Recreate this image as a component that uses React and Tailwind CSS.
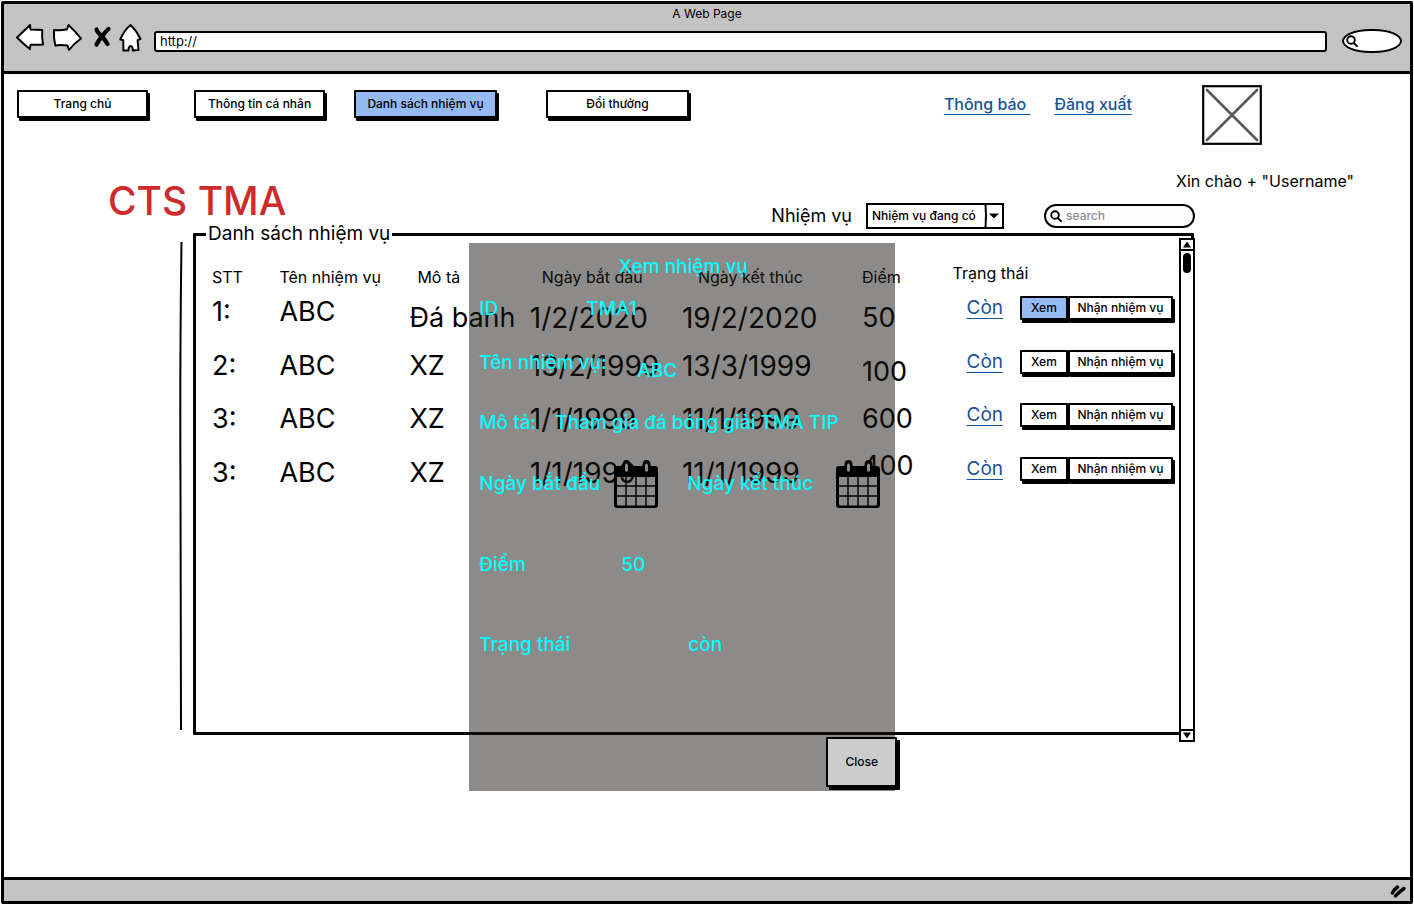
import React from 'react';

const navItems = [
  { label: 'Trang chủ', place: 'w-[131px] mr-[46px]' },
  { label: 'Thông tin cá nhân', place: 'w-[131px] mr-[29px]' },
  { label: 'Danh sách nhiệm vụ', place: 'w-[143px] mr-[49px]', active: true },
  { label: 'Đổi thưởng', place: 'w-[143px]' },
];

const tasks = [
  { no: '1:', name: 'ABC', desc: 'Đá banh', start: '1/2/2020', end: '19/2/2020', points: '50', height: 'h-[54px]', detail: 'align-bottom', pointsAlign: 'align-bottom', active: true },
  { no: '2:', name: 'ABC', desc: 'XZ', start: '13/2/1999', end: '13/3/1999', points: '100', height: 'h-[54px]', detail: 'align-middle', pointsAlign: 'align-bottom' },
  { no: '3:', name: 'ABC', desc: 'XZ', start: '1/1/1999', end: '11/1/1999', points: '600', height: 'h-[52px]', detail: 'align-middle', pointsAlign: 'align-middle' },
  { no: '3:', name: 'ABC', desc: 'XZ', start: '1/1/1999', end: '11/1/1999', points: '400', height: 'h-[56px]', detail: 'align-middle', pointsAlign: 'align-top' },
];

function SketchButton({ children, className = '', active = false }) {
  return (
    <button
      type="button"
      className={`shrink-0 whitespace-nowrap rounded-[1px] border-2 border-black font-medium shadow-[2px_3px_0_#000] ${active ? 'bg-[#94b9f3]' : 'bg-white'} ${className}`}
    >
      {children}
    </button>
  );
}

function SearchIcon({ className }) {
  return (
    <svg viewBox="0 0 12 12" className={className} fill="none" stroke="#000" strokeWidth="1.9" strokeLinecap="round" aria-hidden="true">
      <circle cx="5" cy="5" r="3.8" />
      <path d="M7.8 8 L11 11.2" />
    </svg>
  );
}

function BrowserIcons() {
  return (
    <svg width="130" height="32" viewBox="0 0 130 32" className="shrink-0" fill="#fff" stroke="#000" strokeWidth="2" strokeLinejoin="round" strokeLinecap="round" aria-hidden="true">
      <path d="M3 15.500 L16 3 L16.500 7.500 Q22 7.600 28.300 8 Q27.600 15 29 22.500 Q22 23 16.500 22.800 L15.800 27 Q9 21.500 3 15.500 Z" />
      <path d="M40 8 Q47 8.600 53 7.300 L54.500 3 Q61 9 67 16.500 Q60 21.500 55 28 L53.500 23.500 Q46 22.500 41.300 23.500 Q39.500 16 40 8 Z" />
      <path d="M82.500 7.500 Q83.500 10.500 88 14.500 Q91.500 18.500 93.500 22 M94.500 7 Q91.500 9.500 88 14.500 Q84.500 18.500 82.500 22.500" fill="none" strokeWidth="4.200" />
      <path d="M116.500 3 Q122 8 126.500 17 L123.600 18.200 L124.500 28 L118.800 28.500 Q119 24 116.500 24 Q114.500 24.500 114.400 28.500 L109.400 28.500 L109.300 18.300 L106.300 17.500 Q110 8.500 116.500 3 Z" />
    </svg>
  );
}

function CalendarIcon() {
  return (
    <svg width="46" height="50" viewBox="0 0 46 50" className="shrink-0" aria-hidden="true">
      <path fillRule="evenodd" fill="#000" d="M4 7 H42 Q45 7 45 10 V46 Q45 49 42 49 H4 Q1 49 1 46 V10 Q1 7 4 7 Z M4 18 V45 Q4 46.500 5.500 46.500 H41 Q42 46.500 42 45 V18 Z" />
      <path fill="none" stroke="#000" strokeWidth="1.400" d="M13 18 V47 M23 18 V47 M33 18 V47 M3 27 H43 M3 37 H43" />
      <path d="M10.500 6 Q10.500 2 13.500 2 Q16.500 2 16.500 6 V12 Q13.500 15 10.500 12 Z M30.500 6 Q30.500 2 33.500 2 Q36.500 2 36.500 6 V12 Q33.500 15 30.500 12 Z" fill="#000" stroke="#000" strokeWidth="2" />
      <path d="M12 6 Q13.500 2.500 15 6 V12 Q13.500 13.500 12 12 Z M32 6 Q33.500 2.500 35 6 V12 Q33.500 13.500 32 12 Z" fill="#8d8a87" />
    </svg>
  );
}

function BrowserBar() {
  return (
    <header className="flex h-[70px] shrink-0 flex-col border-b-[3px] border-black bg-[#c3c3c3]">
      <p className="h-[18px] pt-0.5 text-center text-xs leading-4">A Web Page</p>
      <div className="flex h-8 items-center pl-2.5 pr-2">
        <BrowserIcons />
        <input
          type="text"
          aria-label="Address"
          defaultValue="http://"
          className="ml-[10px] mt-1.5 h-[21px] min-w-0 flex-1 rounded-[3px] border-2 border-black bg-white px-1 text-[13px] outline-none"
        />
        <label className="ml-[15px] mt-1.5 flex h-6 w-[60px] items-center rounded-[28px/12px] border-2 border-black bg-white pl-0.5">
          <SearchIcon className="size-3 shrink-0" />
          <input type="text" aria-label="Quick search" className="min-w-0 flex-1 bg-transparent text-xs outline-none" />
        </label>
      </div>
    </header>
  );
}

function TopNav() {
  return (
    <div className="flex items-start pl-[13px]">
      <nav className="mt-[5px] flex">
        {navItems.map((item) => (
          <SketchButton key={item.label} active={item.active} className={`h-7 text-xs ${item.place}`}>
            {item.label}
          </SketchButton>
        ))}
      </nav>
      <div className="ml-auto mr-[148px] flex items-start">
        <div className="mt-[7px] flex gap-6 text-base font-medium text-[#1a5296]">
          <a href="#thong-bao" className="whitespace-pre underline decoration-1 underline-offset-4">{'Thông báo '}</a>
          <a href="#dang-xuat" className="underline decoration-1 underline-offset-4">Đăng xuất</a>
        </div>
        <svg width="60" height="60" viewBox="0 0 60 60" className="ml-[70px]" role="img" aria-label="Avatar">
          <rect x="1.200" y="1.200" width="57.600" height="57.600" fill="#fff" stroke="#000" strokeWidth="2.200" />
          <path d="M5 5 L55 55 M55 5 L5 55" stroke="#575757" strokeWidth="2.600" strokeLinecap="round" />
        </svg>
      </div>
    </div>
  );
}

function Filters() {
  return (
    <div className="flex h-[60px] justify-between pl-[104px]">
      <h1 className="flex items-center pt-1 text-[39px] font-medium text-[#d02b2b]">CTS TMA</h1>
      <div className="flex flex-col items-end justify-between">
        <p className="mr-14 text-base">Xin chào + "Username"</p>
        <div className="mr-[215px] flex items-center">
          <label htmlFor="task-filter" className="text-[18px] leading-6">Nhiệm vụ</label>
          <div className="relative ml-[14px]">
            <select id="task-filter" className="block h-[26px] w-[138px] appearance-none border-2 border-black bg-white pl-1 text-xs font-medium outline-none">
              <option>Nhiệm vụ đang có</option>
            </select>
            <svg width="20" height="26" viewBox="0 0 20 26" className="pointer-events-none absolute right-0 top-0" aria-hidden="true">
              <path d="M1.500 1 Q2.500 12 1.500 25" fill="none" stroke="#000" strokeWidth="2" />
              <path d="M5 10.500 H15 L10 15.500 Z" />
            </svg>
          </div>
          <label className="ml-10 flex h-6 w-[151px] items-center rounded-full border-2 border-black bg-[#fdfdfd] pl-1">
            <SearchIcon className="size-3 shrink-0" />
            <input type="search" aria-label="Search tasks" placeholder="search" className="min-w-0 flex-1 bg-transparent pl-1 text-xs font-medium outline-none placeholder:text-[#8c8c94]" />
          </label>
        </div>
      </div>
    </div>
  );
}

function TaskTable() {
  return (
    <table className="w-full table-fixed whitespace-nowrap text-left">
      <colgroup>
        <col className="w-[7%]" />
        <col className="w-[13.5%]" />
        <col className="w-[12.5%]" />
        <col className="w-[15.8%]" />
        <col className="w-[18.7%]" />
        <col className="w-[9.4%]" />
        <col className="w-[7%]" />
        <col />
      </colgroup>
      <thead>
        <tr className="h-5 text-base leading-4 [&>th]:font-normal">
          <th className="align-bottom">STT</th>
          <th className="align-bottom">Tên nhiệm vụ</th>
          <th className="pl-2 align-bottom">Mô tả</th>
          <th className="pl-3 align-bottom">Ngày bắt đầu</th>
          <th className="pl-4 align-bottom">Ngày kết thúc</th>
          <th className="align-bottom">Điểm</th>
          <th colSpan={2} className="align-top">Trạng thái</th>
        </tr>
      </thead>
      <tbody>
        {tasks.map((task, i) => (
          <tr key={i} className={`text-[27px] leading-[42px] ${task.height}`}>
            <td>{task.no}</td>
            <td>{task.name}</td>
            <td className={task.detail}>{task.desc}</td>
            <td className={`text-[28px] ${task.detail}`}>{task.start}</td>
            <td className={`text-[28px] ${task.detail}`}>{task.end}</td>
            <td className={task.pointsAlign}>{task.points}</td>
            <td className="pb-2 pl-3.5 text-[19px] leading-6">
              <a href="#con" className="text-[#1a5296] underline decoration-1 underline-offset-4">Còn</a>
            </td>
            <td className="pb-2 text-xs leading-4">
              <div className="flex">
                <SketchButton active={task.active} className="h-6 w-12">Xem</SketchButton>
                <SketchButton className="h-6 w-[105px]">Nhận nhiệm vụ</SketchButton>
              </div>
            </td>
          </tr>
        ))}
      </tbody>
    </table>
  );
}

function ScrollTrack() {
  return (
    <div className="absolute -bottom-2.5 -right-1 -top-px flex w-4 flex-col items-center border-2 border-black bg-white" aria-hidden="true">
      <svg width="12" height="11" viewBox="0 0 12 11" className="shrink-0">
        <path d="M6 1.500 L10 7.500 H2 Z" />
        <path d="M0 10 H12" stroke="#000" strokeWidth="2" />
      </svg>
      <div className="mt-0.5 h-5 w-2 shrink-0 rounded-sm bg-black" />
      <svg width="12" height="11" viewBox="0 0 12 11" className="mt-auto shrink-0">
        <path d="M2 3.500 H10 L6 9.500 Z" />
        <path d="M0 1 H12" stroke="#000" strokeWidth="2" />
      </svg>
    </div>
  );
}

function TaskDialog() {
  return (
    <div
      role="dialog"
      aria-labelledby="dialog-title"
      className="absolute left-[27.6%] top-3.5 h-[548px] w-[426px] whitespace-nowrap bg-[rgb(28_23_20/0.5)] pl-2.5 pt-3 text-[19px] font-medium leading-6 text-[#00ffff]"
    >
      <h2 id="dialog-title" className="pr-2 text-center">Xem nhiệm vụ</h2>
      <dl className="flex h-[42px] items-end">
        <dt className="w-[107px]">ID</dt>
        <dd>TMA1</dd>
      </dl>
      <dl className="flex h-[62px] items-end">
        <dt className="w-[158px] pb-2">Tên nhiệm vụ:</dt>
        <dd>ABC</dd>
      </dl>
      <dl className="flex h-[52px] items-end">
        <dt className="w-[76px]">Mô tả:</dt>
        <dd>Tham gia đá bóng giải TMA TIP</dd>
      </dl>
      <div className="mt-6 flex h-[50px] items-center">
        <span className="w-[134px]">Ngày bắt đầu</span>
        <CalendarIcon />
        <span className="ml-7 w-[148px]">Ngày kết thúc</span>
        <CalendarIcon />
      </div>
      <dl className="mt-11 flex">
        <dt className="w-[142px]">Điểm</dt>
        <dd>50</dd>
      </dl>
      <dl className="mt-14 flex">
        <dt className="w-[209px]">Trạng thái</dt>
        <dd>còn</dd>
      </dl>
      <button
        type="button"
        className="absolute -right-0.5 bottom-1 h-[50px] w-[71px] rounded-[1px] border-2 border-black bg-[#ccc] text-xs text-black shadow-[3px_3px_0_#000]"
      >
        Close
      </button>
    </div>
  );
}

export default function App() {
  return (
    <div className="flex min-h-screen flex-col bg-white p-px font-['Inter','Noto_Sans',sans-serif] text-black">
      <div className="flex flex-1 flex-col rounded-[2px] border-[3px] border-black">
        <BrowserBar />
        <main className="flex-1 pb-[120px] pt-[11px]">
          <TopNav />
          <div className="h-6" />
          <Filters />
          <div className="ml-[175px] mr-[216px] flex items-end">
            <svg width="4" height="490" viewBox="0 0 4 490" className="mb-1 mr-2.5 shrink-0" aria-hidden="true">
              <path d="M2.500 1 Q0.800 120 1.500 250 T2 489" fill="none" stroke="#000" strokeWidth="2" />
            </svg>
            <div className="relative min-w-0 flex-1">
              <fieldset className="relative h-[506px] rounded-[1px] border-[3px] border-black pl-4 pr-4 pt-[26px]">
                <legend className="-ml-[6px] px-0.5 text-[19px] leading-[10px]">Danh sách nhiệm vụ</legend>
                <TaskTable />
                <ScrollTrack />
              </fieldset>
              <TaskDialog />
            </div>
          </div>
        </main>
        <footer className="flex h-6 shrink-0 items-center justify-end border-t-[3px] border-black bg-[#c3c3c3] pr-1">
          <svg width="16" height="14" viewBox="0 0 16 14" stroke="#000" strokeWidth="3.400" strokeLinecap="round" aria-hidden="true">
            <path d="M2.500 9 Q4 5.500 7.500 3 M5.500 12 Q9 8 14 4.500" fill="none" />
          </svg>
        </footer>
      </div>
    </div>
  );
}
